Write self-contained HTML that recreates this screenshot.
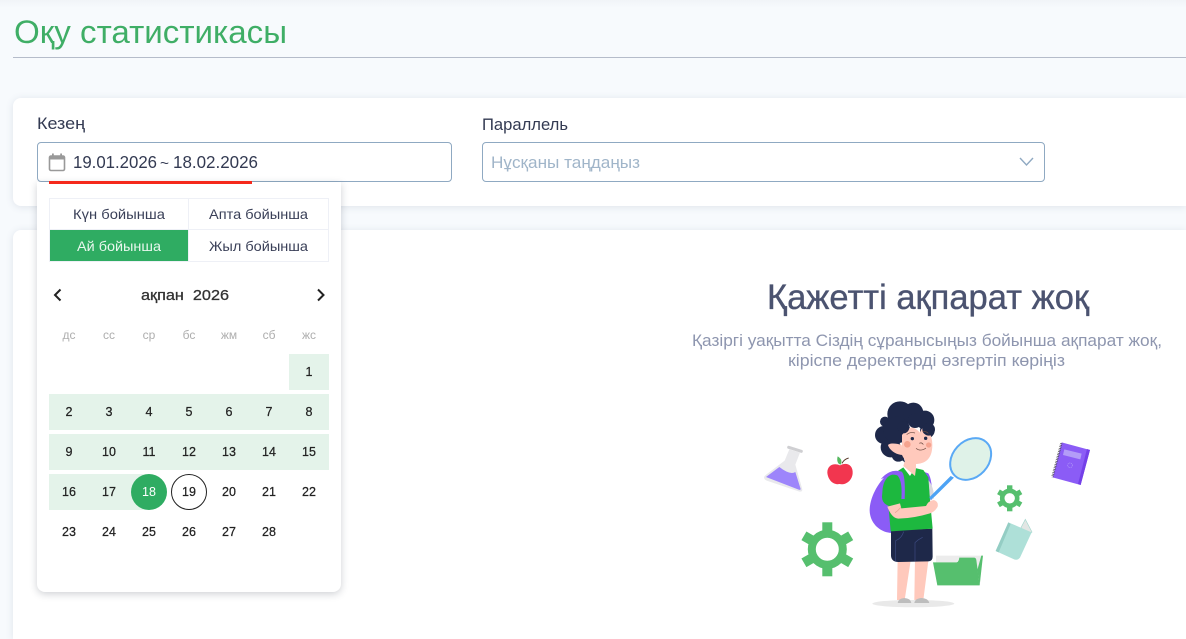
<!DOCTYPE html>
<html lang="kk">
<head>
<meta charset="utf-8">
<style>
html,body{margin:0;padding:0;width:1186px;height:639px;overflow:hidden;background:#f7fafd;font-family:"Liberation Sans",sans-serif}
#w{position:relative;width:1186px;height:639px;overflow:hidden}
.abs{position:absolute;box-sizing:border-box}
svg{position:absolute;left:0;top:0}
text{font-family:"Liberation Sans",sans-serif}
</style>
</head>
<body>
<div id="w">
<div class="abs" style="left:0;top:0;width:1186px;height:8px;background:linear-gradient(#f1f4f8,#f7fafd)"></div>
<div class="abs" style="left:13px;top:57px;width:1173px;height:1px;background:#b5bcca"></div>
<div class="abs" style="left:13px;top:98px;width:1173px;height:108px;background:#fff;border-radius:8px 0 0 8px;box-shadow:0 1px 8px rgba(60,80,110,.13)"></div>
<div class="abs" style="left:13px;top:230px;width:1173px;height:409px;background:#fff;border-radius:8px 0 0 0;box-shadow:0 1px 8px rgba(60,80,110,.13)"></div>
<div class="abs" style="left:37px;top:142px;width:415px;height:40px;border:1px solid #8fa9c2;border-radius:4px;background:#fff"></div>
<div class="abs" style="left:482px;top:142px;width:563px;height:40px;border:1px solid #8fa9c2;border-radius:4px;background:#fff"></div>
<div class="abs" style="left:37px;top:182px;width:304px;height:410px;background:#fff;border-radius:0 0 8px 8px;box-shadow:0 2px 8px rgba(30,40,60,.22)"></div>
<div class="abs" style="left:49px;top:181px;width:203px;height:3px;background:#f5291c"></div>
<svg width="1186" height="639" viewBox="0 0 1186 639" xmlns="http://www.w3.org/2000/svg">
<!-- headings and form text -->
<text x="14" y="43" font-size="32" fill="#3fae66" textLength="273" lengthAdjust="spacingAndGlyphs">Оқу статистикасы</text>
<text x="37" y="129" font-size="17" fill="#333a52" textLength="48" lengthAdjust="spacingAndGlyphs">Кезең</text>
<text x="482" y="130" font-size="17" fill="#333a52" textLength="86" lengthAdjust="spacingAndGlyphs">Параллель</text>
<text x="73" y="168" font-size="17.500" fill="#333a52" textLength="84" lengthAdjust="spacingAndGlyphs">19.01.2026</text>
<text x="160" y="168" font-size="15" fill="#333a52" textLength="9" lengthAdjust="spacingAndGlyphs">~</text>
<text x="173" y="168" font-size="17.500" fill="#333a52" textLength="85" lengthAdjust="spacingAndGlyphs">18.02.2026</text>
<text x="491" y="168" font-size="17" fill="#a0b5c9" textLength="149" lengthAdjust="spacingAndGlyphs">Нұсқаны таңдаңыз</text>
<path d="M1020 158l6.500 7 6.500-7" fill="none" stroke="#8fa9c2" stroke-width="1.400"/>
<!-- calendar icon -->
<rect x="49.500" y="156" width="15" height="14.500" rx="1.500" fill="none" stroke="#999" stroke-width="1.600"/>
<rect x="49.500" y="156" width="15" height="3.500" fill="#999"/>
<rect x="52" y="153.500" width="1.800" height="3" fill="#999"/><rect x="60.200" y="153.500" width="1.800" height="3" fill="#999"/>
<!-- tabs -->
<rect x="49.500" y="198.500" width="279" height="63" fill="#fff" stroke="#eef0f6"/>
<path d="M49 229.500h280M188.500 198v64" stroke="#eef0f6" fill="none"/>
<rect x="50" y="230" width="138" height="31" fill="#2fac62"/>
<text x="73" y="219" font-size="14" fill="#3a4058" textLength="92" lengthAdjust="spacingAndGlyphs">Күн бойынша</text>
<text x="209" y="219" font-size="14" fill="#3a4058" textLength="99" lengthAdjust="spacingAndGlyphs">Апта бойынша</text>
<text x="77" y="251" font-size="14" fill="#e9f7ee" textLength="84" lengthAdjust="spacingAndGlyphs">Ай бойынша</text>
<text x="209" y="251" font-size="14" fill="#3a4058" textLength="99" lengthAdjust="spacingAndGlyphs">Жыл бойынша</text>
<!-- calendar header -->
<path d="M60.500 289.500l-5.500 5.500 5.500 5.500M318 289.500l5.500 5.500-5.500 5.500" fill="none" stroke="#222" stroke-width="2"/>
<text x="141" y="300" font-size="15" fill="#333" stroke="#333" stroke-width=".3" textLength="88" lengthAdjust="spacingAndGlyphs" xml:space="preserve">ақпан  2026</text>
<g font-size="12" fill="#aeaeae" text-anchor="middle">
<text x="69" y="339">дс</text><text x="109" y="339">сс</text><text x="149" y="339">ср</text><text x="189" y="339">бс</text><text x="229" y="339">жм</text><text x="269" y="339">сб</text><text x="309" y="339">жс</text>
</g>
<!-- range -->
<g fill="#e4f3ea">
<rect x="289" y="354" width="40" height="36"/>
<rect x="49" y="394" width="280" height="36"/>
<rect x="49" y="434" width="280" height="36"/>
<rect x="49" y="474" width="100" height="36"/>
</g>
<circle cx="149" cy="492" r="18" fill="#2fac62"/>
<circle cx="189" cy="492" r="17.500" fill="#fff" stroke="#222" stroke-width="1"/>
<g font-size="12.500" fill="#222" text-anchor="middle" stroke="#222" stroke-width=".25">
<text x="309" y="376">1</text>
<text x="69" y="416">2</text><text x="109" y="416">3</text><text x="149" y="416">4</text><text x="189" y="416">5</text><text x="229" y="416">6</text><text x="269" y="416">7</text><text x="309" y="416">8</text>
<text x="69" y="456">9</text><text x="109" y="456">10</text><text x="149" y="456">11</text><text x="189" y="456">12</text><text x="229" y="456">13</text><text x="269" y="456">14</text><text x="309" y="456">15</text>
<text x="69" y="496">16</text><text x="109" y="496">17</text><text x="189" y="496">19</text><text x="229" y="496">20</text><text x="269" y="496">21</text><text x="309" y="496">22</text>
<text x="69" y="536">23</text><text x="109" y="536">24</text><text x="149" y="536">25</text><text x="189" y="536">26</text><text x="229" y="536">27</text><text x="269" y="536">28</text>
</g>
<text x="149" y="496" font-size="12.500" fill="#fff" text-anchor="middle">18</text>
<!-- empty state -->
<text x="767" y="309" font-size="35" fill="#4b5370" stroke="#4b5370" stroke-width=".35" textLength="322" lengthAdjust="spacingAndGlyphs">Қажетті ақпарат жоқ</text>
<text x="692" y="346" font-size="17" fill="#8e96af" textLength="470" lengthAdjust="spacingAndGlyphs">Қазіргі уақытта Сіздің сұранысыңыз бойынша ақпарат жоқ,</text>
<text x="788" y="366" font-size="17" fill="#8e96af" textLength="277" lengthAdjust="spacingAndGlyphs">кіріспе деректерді өзгертіп көріңіз</text>
<!-- flask and apple (zoom-3 coords) -->
<g transform="translate(750 390) scale(.3333)">
<path d="M118 178L150 188L136 224L157 298Q157 307 146 304L50 272Q36 264 47 255L104 212Z" fill="#e9e9ec"/>
<path d="M48 261L88 231Q120 256 136 246L152 297Q152 301 146 299Z" fill="#9d85fb"/>
<path d="M116 172L154 184" stroke="#cfcfd2" stroke-width="9" stroke-linecap="round"/>
<path d="M270 226C290 215 310 225 308 250C306 272 288 286 268 282C250 286 234 270 232 248C232 225 252 218 270 226Z" fill="#f2364f"/>
<path d="M272 224C262 222 260 210 263 199C272 204 278 212 272 224Z" fill="#55b85f"/>
<path d="M276 220Q282 208 296 204" stroke="#5a3a2a" stroke-width="3" fill="none"/>
</g>
<!-- gears -->
<g transform="translate(827.300 549.300)" fill="#56bf6e">
<circle r="15.500" fill="none" stroke="#56bf6e" stroke-width="8"/>
<rect x="-5" y="-27" width="10" height="10"/>
<rect x="-5" y="-27" width="10" height="10" transform="rotate(60)"/>
<rect x="-5" y="-27" width="10" height="10" transform="rotate(120)"/>
<rect x="-5" y="-27" width="10" height="10" transform="rotate(180)"/>
<rect x="-5" y="-27" width="10" height="10" transform="rotate(240)"/>
<rect x="-5" y="-27" width="10" height="10" transform="rotate(300)"/>
</g>
<g transform="translate(1009.700 498.300)" fill="#56bf6e">
<circle r="7.500" fill="none" stroke="#56bf6e" stroke-width="4.600"/>
<rect x="-2.700" y="-13" width="5.400" height="5"/>
<rect x="-2.700" y="-13" width="5.400" height="5" transform="rotate(60)"/>
<rect x="-2.700" y="-13" width="5.400" height="5" transform="rotate(120)"/>
<rect x="-2.700" y="-13" width="5.400" height="5" transform="rotate(180)"/>
<rect x="-2.700" y="-13" width="5.400" height="5" transform="rotate(240)"/>
<rect x="-2.700" y="-13" width="5.400" height="5" transform="rotate(300)"/>
</g>
<!-- body, objects (zoom-4 coords) -->
<g transform="translate(860 390) scale(.3333)">
<ellipse cx="160" cy="641" rx="123" ry="11" fill="#e9e9e9"/>
<path d="M113 505H153L134 630H111ZM165 505H206L190 630H163Z" fill="#ffc9bc"/>
<path d="M113 639Q115 625 133 624Q152 625 154 639ZM163 639Q165 625 185 624Q205 625 208 639Z" fill="#bdbdbd"/>
<path d="M96 245C62 262 28 320 29 362C30 402 62 428 95 429L120 300Z" fill="#8b5cf6"/>
<path d="M190 245L205 250Q218 270 216 330L200 330Z" fill="#8b5cf6"/>
<path d="M205 270Q222 290 222 325L210 332Z" fill="#d9d9de"/>
<path d="M93 421L217 416L218 500Q218 514 205 514L115 516Q95 516 93 498Z" fill="#1e2849"/>
<path d="M107 515V452Q125 445 131 425M165 515V458Q175 448 188 442" stroke="#3c4a80" stroke-width="2" fill="none"/>
<path d="M130 232L95 255L85 345L92 424L218 416L210 330L205 262L190 240L165 234L150 258Z" fill="#1db83f"/>
<path d="M68 295Q74 258 100 253Q118 255 124 280L122 325L85 347Q66 340 66 320Z" fill="#1db83f"/>
<path d="M62 268Q90 234 125 245Q137 255 134 327L124 327Q128 272 112 256Q90 250 75 262Z" fill="#8b5cf6"/>
<path d="M82 350L120 340L124 355L198 348Q205 332 222 330Q236 335 233 350Q225 365 210 370Q160 385 115 386Q95 385 82 350Z" fill="#ffc9bc"/>
<path d="M105 368Q115 362 122 352" stroke="#e5a08f" stroke-width="2" fill="none"/>
<path d="M212 330L226 318L282 263L272 258L208 322Z" fill="#4da3f5"/>
<ellipse cx="332" cy="207" rx="69" ry="54" transform="rotate(-47 332 207)" fill="#dff2e8" stroke="#5aa9f5" stroke-width="6"/>
<path d="M228 497H366L360 585L345 505H298L290 517H228Z" fill="#ececec"/>
<path d="M219 517H290Q296 516 298 503H342Q348 503 349 510L359 586H232Z" fill="#56bf6e"/>
<path d="M359 586L369 497L364 497L352 540Z" fill="#56bf6e"/>
<path d="M483 413L496 388L516 426L500 440Z" fill="#e2e6e4" stroke="#a4d6cd" stroke-width="2"/>
<path d="M445 397L515 427L480 503Q472 513 460 507L407 483Z" fill="#aee0d8"/>
<path d="M445 397L407 483L416 487L452 402Z" fill="#94cdc4"/>
<path d="M605 157L690 180L662 285L578 262Z" fill="#8b5cf6"/>
<path d="M690 180L681 177L654 282L662 285Z" fill="#7440e8"/>
<path d="M613 178L665 191L661 208L609 195Z" fill="#b39cf8"/>
<path d="M604 160L577 262" stroke="#444" stroke-width="7" stroke-dasharray="2 3"/>
<circle cx="630" cy="226" r="7" fill="none" stroke="#b39cf8" stroke-width="2" stroke-dasharray="3 2"/>
</g>
<!-- head (zoom-7 coords) -->
<g transform="translate(870 400) scale(.3333)">
<path d="M105 180H138V205L135 228L100 198Z" fill="#ffc9bc"/>
<g fill="#1e2849">
<circle cx="90" cy="42" r="38"/><circle cx="130" cy="38" r="30"/><circle cx="165" cy="60" r="28"/><circle cx="172" cy="92" r="22"/>
<circle cx="45" cy="65" r="15"/><circle cx="42" cy="105" r="27"/><circle cx="62" cy="142" r="30"/><circle cx="85" cy="165" r="20"/><circle cx="80" cy="90" r="40"/>
<path d="M80 170L105 187L95 150Z"/>
</g>
<path d="M96 105Q110 85 125 82Q140 85 150 98Q155 80 165 85Q187 100 187 135C187 178 165 192 135 192Q108 192 96 165Z" fill="#ffc9bc"/>
<g fill="#1e2849"><circle cx="135" cy="62" r="22"/><circle cx="176" cy="88" r="19"/><circle cx="100" cy="82" r="18"/></g>
<path d="M95 135C80 130 60 128 54 135C58 150 78 165 100 165Z" fill="#ffc9bc"/>
<circle cx="112" cy="133" r="10" fill="#f5a38f"/><circle cx="176" cy="135" r="8" fill="#f5a38f"/>
<circle cx="127" cy="116" r="5" fill="#1e2849"/><circle cx="167" cy="115" r="5" fill="#1e2849"/>
<path d="M110 104Q120 95 135 99M158 95Q168 93 175 100M138 145Q152 156 168 144M148 130Q156 126 160 134" stroke="#6b4a40" stroke-width="2" fill="none"/>
</g>
</svg>
</div>
</body>
</html>
